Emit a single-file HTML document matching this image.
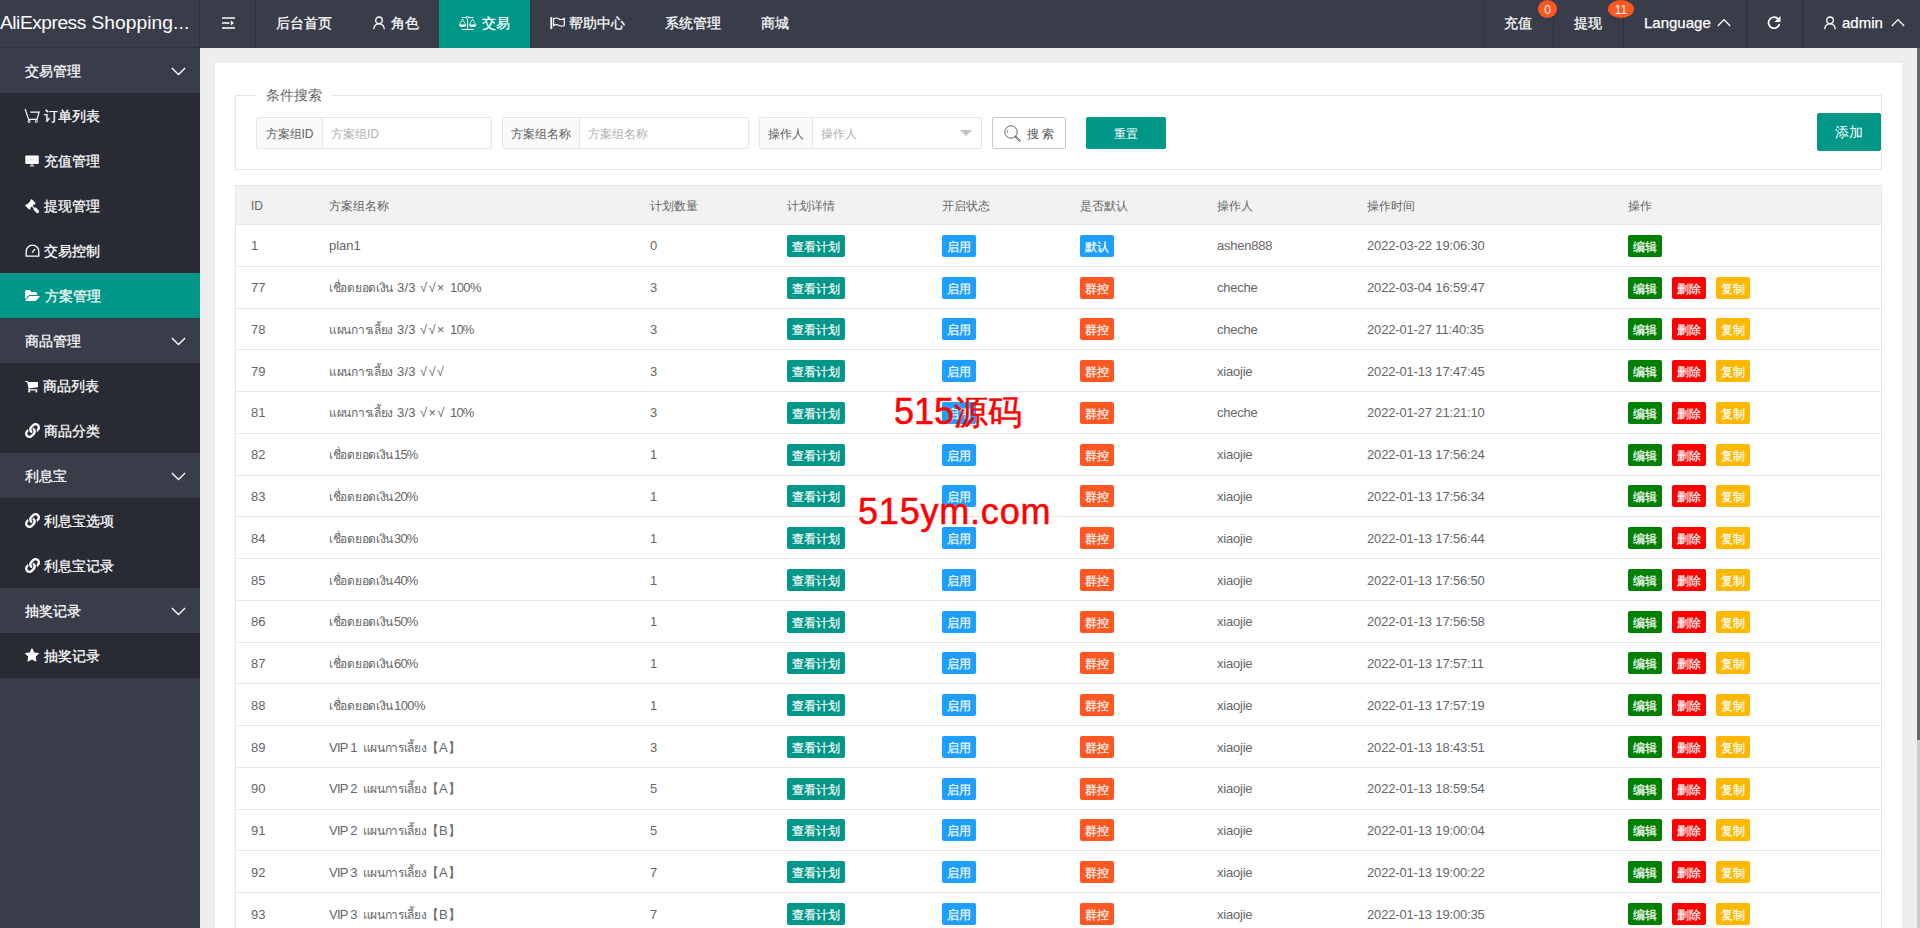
<!DOCTYPE html>
<html lang="zh">
<head>
<meta charset="utf-8">
<title>AliExpress Shopping</title>
<style>
*{box-sizing:border-box;margin:0;padding:0}
html,body{width:1920px;height:928px;overflow:hidden}
body{position:relative;background:#eee;font-family:"Liberation Sans",sans-serif;font-size:14px;color:#666;line-height:1}
.abs{position:absolute}
svg{display:block}
/* header */
#hd{position:absolute;left:0;top:0;width:1920px;height:48px;background:#393D49;color:#fff}
#hd .t{position:absolute;top:0;height:48px;line-height:46px;font-size:14px;color:#fff;white-space:nowrap}
#hd .dv{position:absolute;top:0;width:1px;height:48px;background:#2f323c}
#hd svg{position:absolute}
#logo{position:absolute;left:0;top:0;width:200px;height:48px;line-height:45.6px;font-size:19.2px;letter-spacing:-0.48px;word-spacing:0.7px;color:#fff;white-space:nowrap;overflow:hidden}
.badge{position:absolute;top:0;height:18px;line-height:20px;border-radius:50%;background:#FF5722;color:#fff;font-size:12px;text-align:center}
/* side */
#sd{position:absolute;left:0;top:48px;width:200px;height:880px;background:#393D49;color:#fff}
#sd .g,#sd .i{position:absolute;left:0;width:200px;height:45px;line-height:46px;font-size:14px;color:#fff;white-space:nowrap}
#sd .g{padding-left:25px}
#sd .i{background:#282B33}
#sd .i.on{background:#009688}
#sd .i span{position:absolute;left:44px;top:0}
#sd .i svg{position:absolute}
#sd .g,#sd .i span,#hd .t{-webkit-text-stroke:0.25px #fff}
#sd .i svg.fa{left:25px;top:15.5px}
#sd .g svg{position:absolute;left:170.5px;top:19px}
/* card */
#card{position:absolute;left:215px;top:63px;width:1687px;height:900px;background:#fff;box-shadow:0 1px 2px 0 rgba(0,0,0,.05)}
#fs{position:absolute;left:235px;top:95px;width:1647px;height:75px;border:1px solid #e6e6e6}
#lg{position:absolute;left:256px;top:85px;padding:0 10px;background:#fff;font-size:14px;line-height:20px;color:#666}
.ig{position:absolute;top:117px;height:32px;border:1px solid #e6e6e6;border-radius:2px;background:#fff;overflow:hidden}
.ig .lb{position:absolute;left:0;top:0;height:30px;line-height:32px;background:#fafafa;border-right:1px solid #e6e6e6;font-size:12px;color:#606060;text-align:center;white-space:nowrap}
.ig .ph{position:absolute;top:0;height:30px;line-height:32px;font-size:12px;color:#b0b0b0;white-space:nowrap}
.btn{position:absolute;color:#fff;background:#009688;border-radius:2px;text-align:center;white-space:nowrap}
/* table */
#tb{position:absolute;left:235px;top:185px;width:1647px;border-collapse:separate;border-spacing:0;table-layout:fixed;border-left:1px solid #e6e6e6;border-right:1px solid #e6e6e6;border-top:1px solid #e6e6e6;font-size:13px;color:#666}
#tb th{height:39px;background:#f2f2f2;border-bottom:1px solid #e6e6e6;font-weight:normal;text-align:left;padding:1px 15px 0;font-size:12px;vertical-align:middle;white-space:nowrap}
#tb td{border-bottom:1px solid #e6e6e6;padding:0 15px;vertical-align:middle;white-space:nowrap;overflow:hidden}
.b{display:inline-block;height:22px;line-height:24.2px;-webkit-text-stroke:.2px #fff;padding:0 5px;font-size:12px;color:#fff;border-radius:2px;vertical-align:middle;margin-right:10px}
#tb tr.s1 td.x{padding-top:2px}
.tm{letter-spacing:-0.16px}
.op{letter-spacing:-0.22px}
.th{display:inline-block;font-size:12px;letter-spacing:-.3px;white-space:nowrap;vertical-align:baseline}
.sg{display:inline-block;white-space:nowrap;vertical-align:baseline}
.tl{background:#009688}.bl{background:#1E9FFF}.or{background:#FF5722}.gr{background:#008000}.rd{background:#f00}.ye{background:#FFB800}
.wm{position:absolute;color:#f00;font-size:36px;line-height:40px;white-space:nowrap;-webkit-text-stroke:0.5px #f00}
#sb{position:absolute;left:1917px;top:48px;width:3px;height:880px;background:#ccc}
#sb i{position:absolute;left:0;top:0;width:3px;height:692px;background:#666}
</style>
</head>
<body>
<div id="sd">
  <div class="g" style="top:0">交易管理<svg width="15" height="9" viewBox="0 0 15 9"><path d="M0.9 1L7.5 7.5L14.1 1" fill="none" stroke="#fff" stroke-width="1.3"/></svg></div>
  <div class="i" style="top:45px"><svg style="left:24px;top:14px" width="17" height="17" viewBox="0 0 17 17"><path d="M1.1 2.05L4.7 12.4H13L15.1 5.1H6.4" fill="none" stroke="#fff" stroke-width="1.15"/><circle cx="5.1" cy="14.4" r="1.1" fill="none" stroke="#fff" stroke-width="1"/><circle cx="12.4" cy="14.4" r="1.1" fill="none" stroke="#fff" stroke-width="1"/></svg><span>订单列表</span></div>
  <div class="i" style="top:90px"><svg style="left:25px;top:17px" width="15" height="12" viewBox="0 0 15 12"><rect x="0.3" y="0.4" width="13.5" height="8.5" rx="1" fill="#fff"/><path d="M7 8.9V10.6M5 10.9H9.2" stroke="#fff" stroke-width="1" fill="none"/><path d="M3 5.5L5.5 4.2L7.5 5L10.5 3" stroke="#d8c8c8" stroke-width="0.7" fill="none"/></svg><span>充值管理</span></div>
  <div class="i" style="top:135px"><svg class="fa" style="left:24.8px;top:16px" width="14.50" height="14.50" viewBox="0 -1536 1792 1792"><path fill="#fff" transform="scale(1,-1)" d="M1771 0C1771 34 1757 67 1734 91L1371 454C1347 477 1314 491 1280 491C1242 491 1211 475 1184 448L928 704L1054 830C1063 839 1068 851 1068 864C1068 877 1063 889 1054 898C1084 868 1106 840 1152 840C1178 840 1201 850 1220 868C1256 902 1304 938 1304 992C1304 1017 1294 1042 1276 1060L868 1468C850 1486 825 1496 800 1496C746 1496 710 1448 676 1412C658 1393 648 1370 648 1344C648 1298 676 1276 706 1246C697 1255 685 1260 672 1260C659 1260 647 1255 638 1246L290 898C281 889 276 877 276 864C276 851 281 839 290 830C260 860 238 888 192 888C166 888 143 878 124 860C88 826 40 790 40 736C40 711 50 686 68 668L476 260C494 242 519 232 544 232C598 232 634 280 668 316C686 335 696 358 696 384C696 430 668 452 638 482C647 473 659 468 672 468C685 468 697 473 706 482L832 608L1088 352C1061 325 1045 294 1045 256C1045 222 1059 189 1083 166L1446 -198C1469 -221 1502 -235 1536 -235C1570 -235 1603 -221 1627 -198L1734 -90C1757 -67 1771 -34 1771 0Z"/></svg><span>提现管理</span></div>
  <div class="i" style="top:180px"><svg style="left:25px;top:16px" width="15" height="13" viewBox="0 0 15 13"><path d="M1.2 12.2V7.5A6.3 6.3 0 0 1 13.8 7.5V12.2Z" fill="none" stroke="#fff" stroke-width="1.3"/><path d="M7.2 8.6L10 5" stroke="#fff" stroke-width="1.3" fill="none"/></svg><span>交易控制</span></div>
  <div class="i on" style="top:225px"><svg class="fa" style="left:25px;top:15.7px" width="15.00" height="14.00" viewBox="0 -1536 1920 1792"><path fill="#fff" transform="scale(1,-1)" d="M1879 584C1879 629 1828 640 1792 640H704C616 640 498 586 440 518L104 122C88 104 73 80 73 56C73 11 124 0 160 0H1248C1336 0 1454 54 1512 122L1848 518C1864 536 1879 560 1879 584ZM1536 928C1536 1051 1435 1152 1312 1152H768V1184C768 1307 667 1408 544 1408H224C101 1408 0 1307 0 1184V224C0 216 1 207 1 199L6 205L343 601C424 697 579 768 704 768H1536Z"/></svg><span style="left:45px">方案管理</span></div>
  <div class="g" style="top:270px">商品管理<svg width="15" height="9" viewBox="0 0 15 9"><path d="M0.9 1L7.5 7.5L14.1 1" fill="none" stroke="#fff" stroke-width="1.3"/></svg></div>
  <div class="i" style="top:315px"><svg class="fa" style="left:24.9px;top:15.6px" width="13.46" height="14.50" viewBox="0 -1536 1664 1792"><path fill="#fff" transform="scale(1,-1)" d="M640 0C640 70 582 128 512 128C442 128 384 70 384 0C384 -70 442 -128 512 -128C582 -128 640 -70 640 0ZM1536 0C1536 70 1478 128 1408 128C1338 128 1280 70 1280 0C1280 -70 1338 -128 1408 -128C1478 -128 1536 -70 1536 0ZM1664 1088C1664 1123 1635 1152 1600 1152H399C389 1200 387 1280 320 1280H64C29 1280 0 1251 0 1216C0 1181 29 1152 64 1152H268L445 329C429 298 384 223 384 192C384 157 413 128 448 128H1472C1507 128 1536 157 1536 192C1536 227 1507 256 1472 256H552C562 276 576 297 576 320C576 344 568 367 563 390L1607 512C1639 516 1664 544 1664 576Z"/></svg><span style="left:43px">商品列表</span></div>
  <div class="i" style="top:360px"><svg style="left:24.6px;top:15.1px" width="15" height="15" viewBox="0 0 512 512"><path fill="#fff" d="M326.612 185.391c59.747 59.809 58.927 155.698.36 214.59-.11.12-.24.25-.36.37l-67.2 67.2c-59.27 59.27-155.699 59.262-214.96 0-59.27-59.26-59.27-155.7 0-214.96l37.106-37.106c9.84-9.84 26.786-3.3 27.294 10.606.648 17.722 3.826 35.527 9.69 52.721 1.986 5.822.567 12.262-3.783 16.612l-13.087 13.087c-28.026 28.026-28.905 73.66-1.155 101.96 28.024 28.579 74.086 28.749 102.325.51l67.2-67.19c28.191-28.191 28.073-73.757 0-101.83-3.701-3.694-7.429-6.564-10.341-8.569a16.037 16.037 0 0 1-6.947-12.606c-.396-10.567 3.348-21.456 11.698-29.806l21.054-21.055c5.521-5.521 14.182-6.199 20.584-1.731a152.482 152.482 0 0 1 20.522 17.197zM467.547 44.449c-59.261-59.262-155.69-59.27-214.96 0l-67.2 67.2c-.12.12-.25.25-.36.37-58.566 58.892-59.387 154.781.36 214.59a152.454 152.454 0 0 0 20.521 17.196c6.402 4.468 15.064 3.789 20.584-1.731l21.054-21.055c8.35-8.35 12.094-19.239 11.698-29.806a16.037 16.037 0 0 0-6.947-12.606c-2.912-2.005-6.64-4.875-10.341-8.569-28.073-28.073-28.191-73.639 0-101.83l67.2-67.19c28.239-28.239 74.3-28.069 102.325.51 27.75 28.3 26.872 73.934-1.155 101.96l-13.087 13.087c-4.35 4.35-5.769 10.79-3.783 16.612 5.864 17.194 9.042 34.999 9.69 52.721.509 13.906 17.454 20.446 27.294 10.606l37.106-37.106c59.271-59.259 59.271-155.699.001-214.959z"/></svg><span>商品分类</span></div>
  <div class="g" style="top:405px">利息宝<svg width="15" height="9" viewBox="0 0 15 9"><path d="M0.9 1L7.5 7.5L14.1 1" fill="none" stroke="#fff" stroke-width="1.3"/></svg></div>
  <div class="i" style="top:450px"><svg style="left:24.6px;top:15.1px" width="15" height="15" viewBox="0 0 512 512"><path fill="#fff" d="M326.612 185.391c59.747 59.809 58.927 155.698.36 214.59-.11.12-.24.25-.36.37l-67.2 67.2c-59.27 59.27-155.699 59.262-214.96 0-59.27-59.26-59.27-155.7 0-214.96l37.106-37.106c9.84-9.84 26.786-3.3 27.294 10.606.648 17.722 3.826 35.527 9.69 52.721 1.986 5.822.567 12.262-3.783 16.612l-13.087 13.087c-28.026 28.026-28.905 73.66-1.155 101.96 28.024 28.579 74.086 28.749 102.325.51l67.2-67.19c28.191-28.191 28.073-73.757 0-101.83-3.701-3.694-7.429-6.564-10.341-8.569a16.037 16.037 0 0 1-6.947-12.606c-.396-10.567 3.348-21.456 11.698-29.806l21.054-21.055c5.521-5.521 14.182-6.199 20.584-1.731a152.482 152.482 0 0 1 20.522 17.197zM467.547 44.449c-59.261-59.262-155.69-59.27-214.96 0l-67.2 67.2c-.12.12-.25.25-.36.37-58.566 58.892-59.387 154.781.36 214.59a152.454 152.454 0 0 0 20.521 17.196c6.402 4.468 15.064 3.789 20.584-1.731l21.054-21.055c8.35-8.35 12.094-19.239 11.698-29.806a16.037 16.037 0 0 0-6.947-12.606c-2.912-2.005-6.64-4.875-10.341-8.569-28.073-28.073-28.191-73.639 0-101.83l67.2-67.19c28.239-28.239 74.3-28.069 102.325.51 27.75 28.3 26.872 73.934-1.155 101.96l-13.087 13.087c-4.35 4.35-5.769 10.79-3.783 16.612 5.864 17.194 9.042 34.999 9.69 52.721.509 13.906 17.454 20.446 27.294 10.606l37.106-37.106c59.271-59.259 59.271-155.699.001-214.959z"/></svg><span>利息宝选项</span></div>
  <div class="i" style="top:495px"><svg style="left:24.6px;top:15.1px" width="15" height="15" viewBox="0 0 512 512"><path fill="#fff" d="M326.612 185.391c59.747 59.809 58.927 155.698.36 214.59-.11.12-.24.25-.36.37l-67.2 67.2c-59.27 59.27-155.699 59.262-214.96 0-59.27-59.26-59.27-155.7 0-214.96l37.106-37.106c9.84-9.84 26.786-3.3 27.294 10.606.648 17.722 3.826 35.527 9.69 52.721 1.986 5.822.567 12.262-3.783 16.612l-13.087 13.087c-28.026 28.026-28.905 73.66-1.155 101.96 28.024 28.579 74.086 28.749 102.325.51l67.2-67.19c28.191-28.191 28.073-73.757 0-101.83-3.701-3.694-7.429-6.564-10.341-8.569a16.037 16.037 0 0 1-6.947-12.606c-.396-10.567 3.348-21.456 11.698-29.806l21.054-21.055c5.521-5.521 14.182-6.199 20.584-1.731a152.482 152.482 0 0 1 20.522 17.197zM467.547 44.449c-59.261-59.262-155.69-59.27-214.96 0l-67.2 67.2c-.12.12-.25.25-.36.37-58.566 58.892-59.387 154.781.36 214.59a152.454 152.454 0 0 0 20.521 17.196c6.402 4.468 15.064 3.789 20.584-1.731l21.054-21.055c8.35-8.35 12.094-19.239 11.698-29.806a16.037 16.037 0 0 0-6.947-12.606c-2.912-2.005-6.64-4.875-10.341-8.569-28.073-28.073-28.191-73.639 0-101.83l67.2-67.19c28.239-28.239 74.3-28.069 102.325.51 27.75 28.3 26.872 73.934-1.155 101.96l-13.087 13.087c-4.35 4.35-5.769 10.79-3.783 16.612 5.864 17.194 9.042 34.999 9.69 52.721.509 13.906 17.454 20.446 27.294 10.606l37.106-37.106c59.271-59.259 59.271-155.699.001-214.959z"/></svg><span>利息宝记录</span></div>
  <div class="g" style="top:540px">抽奖记录<svg width="15" height="9" viewBox="0 0 15 9"><path d="M0.9 1L7.5 7.5L14.1 1" fill="none" stroke="#fff" stroke-width="1.3"/></svg></div>
  <div class="i" style="top:585px"><svg class="fa" style="left:25.1px;top:15.2px" width="13.93" height="15.00" viewBox="0 -1536 1664 1792"><path fill="#fff" transform="scale(1,-1)" d="M1664 889C1664 919 1632 931 1608 935L1106 1008L881 1463C872 1482 855 1504 832 1504C809 1504 792 1482 783 1463L558 1008L56 935C31 931 0 919 0 889C0 871 13 854 25 841L389 487L303 -13C302 -20 301 -26 301 -33C301 -59 314 -83 343 -83C357 -83 370 -78 383 -71L832 165L1281 -71C1293 -78 1307 -83 1321 -83C1350 -83 1362 -59 1362 -33C1362 -26 1362 -20 1361 -13L1275 487L1638 841C1651 854 1664 871 1664 889Z"/></svg><span>抽奖记录</span></div>
</div>

<div id="card"></div>
<div id="fs"></div>
<div id="lg">条件搜索</div>

<div class="ig" style="left:256px;width:236px"><div class="lb" style="width:66px">方案组ID</div><div class="ph" style="left:74px">方案组ID</div></div>
<div class="ig" style="left:502px;width:247px"><div class="lb" style="width:77px">方案组名称</div><div class="ph" style="left:85px">方案组名称</div></div>
<div class="ig" style="left:759px;width:223px"><div class="lb" style="width:53px">操作人</div><div class="ph" style="left:61px">操作人</div>
  <svg class="abs" style="left:200px;top:12px" width="12" height="6" viewBox="0 0 12 6"><path d="M0 0H12L6 6Z" fill="#c2c2c2"/></svg></div>
<div class="abs" style="left:992px;top:117px;width:74px;height:32px;border:1px solid #c9c9c9;border-radius:2px;background:#fff;font-size:12px;line-height:30px;color:#555;white-space:nowrap">
  <svg class="abs" style="left:10.5px;top:7px" width="18" height="18" viewBox="0 0 18 18"><circle cx="7" cy="7" r="6.2" fill="none" stroke="#666" stroke-width="1"/><path d="M4 4.5A4 4 0 0 0 3.6 8" fill="none" stroke="#777" stroke-width="0.8"/><path d="M11.6 11.6L15.6 15.6" stroke="#666" stroke-width="2" stroke-linecap="round" fill="none"/><path d="M12.3 12.3L15.3 15.3" stroke="#fff" stroke-width="0.6" fill="none"/></svg>
  <span class="abs" style="left:34px;top:1px">搜 索</span></div>
<div class="btn" style="left:1086px;top:117px;width:80px;height:32px;line-height:34px;font-size:12px">重置</div>
<div class="btn" style="left:1817px;top:113px;width:64px;height:38px;line-height:38px;font-size:14px">添加</div>

<table id="tb">
<colgroup><col style="width:78px"><col style="width:321px"><col style="width:137px"><col style="width:155px"><col style="width:138px"><col style="width:137px"><col style="width:150px"><col style="width:261px"><col></colgroup>
<thead><tr><th>ID</th><th>方案组名称</th><th>计划数量</th><th>计划详情</th><th>开启状态</th><th>是否默认</th><th>操作人</th><th>操作时间</th><th>操作</th></tr></thead>
<tbody>
<tr style="height:42px"><td class="x">1</td><td class="x">plan1</td><td class="x">0</td><td><span class="b tl">查看计划</span></td><td><span class="b bl">启用</span></td><td><span class="b bl">默认</span></td><td class="x op">ashen888</td><td class="x tm">2022-03-22 19:06:30</td><td><span class="b gr">编辑</span></td></tr>
<tr style="height:42px"><td class="x">77</td><td class="x"><span class="th" style="width:68px">เชื่อดยอดเงิน </span><span class="sg" style="width:23px;letter-spacing:.2px">3/3 </span><span class="sg" style="width:30px;letter-spacing:1.3px">√√× </span><span class="sg" style="letter-spacing:-.6px">100%</span></td><td class="x">3</td><td><span class="b tl">查看计划</span></td><td><span class="b bl">启用</span></td><td><span class="b or">群控</span></td><td class="x op">cheche</td><td class="x tm">2022-03-04 16:59:47</td><td><span class="b gr">编辑</span><span class="b rd">删除</span><span class="b ye">复制</span></td></tr>
<tr style="height:41px"><td class="x">78</td><td class="x"><span class="th" style="width:68px">แผนการเลี้ยง </span><span class="sg" style="width:23px;letter-spacing:.2px">3/3 </span><span class="sg" style="width:30px;letter-spacing:1.3px">√√× </span><span class="sg" style="letter-spacing:-.8px">10%</span></td><td class="x">3</td><td><span class="b tl">查看计划</span></td><td><span class="b bl">启用</span></td><td><span class="b or">群控</span></td><td class="x op">cheche</td><td class="x tm">2022-01-27 11:40:35</td><td><span class="b gr">编辑</span><span class="b rd">删除</span><span class="b ye">复制</span></td></tr>
<tr class="s1" style="height:42px"><td class="x">79</td><td class="x"><span class="th" style="width:68px">แผนการเลี้ยง </span><span class="sg" style="width:23px;letter-spacing:.2px">3/3 </span><span class="sg" style="width:30px;letter-spacing:1.3px">√√√ </span></td><td class="x">3</td><td><span class="b tl">查看计划</span></td><td><span class="b bl">启用</span></td><td><span class="b or">群控</span></td><td class="x op">xiaojie</td><td class="x tm">2022-01-13 17:47:45</td><td><span class="b gr">编辑</span><span class="b rd">删除</span><span class="b ye">复制</span></td></tr>
<tr style="height:42px"><td class="x">81</td><td class="x"><span class="th" style="width:68px">แผนการเลี้ยง </span><span class="sg" style="width:23px;letter-spacing:.2px">3/3 </span><span class="sg" style="width:30px;letter-spacing:1.3px">√×√ </span><span class="sg" style="letter-spacing:-.8px">10%</span></td><td class="x">3</td><td><span class="b tl">查看计划</span></td><td><span class="b bl">启用</span></td><td><span class="b or">群控</span></td><td class="x op">cheche</td><td class="x tm">2022-01-27 21:21:10</td><td><span class="b gr">编辑</span><span class="b rd">删除</span><span class="b ye">复制</span></td></tr>
<tr style="height:42px"><td class="x">82</td><td class="x"><span class="th" style="width:65px">เชื่อดยอดเงิน</span><span class="sg" style="letter-spacing:-.8px">15%</span></td><td class="x">1</td><td><span class="b tl">查看计划</span></td><td><span class="b bl">启用</span></td><td><span class="b or">群控</span></td><td class="x op">xiaojie</td><td class="x tm">2022-01-13 17:56:24</td><td><span class="b gr">编辑</span><span class="b rd">删除</span><span class="b ye">复制</span></td></tr>
<tr style="height:41px"><td class="x">83</td><td class="x"><span class="th" style="width:65px">เชื่อดยอดเงิน</span><span class="sg" style="letter-spacing:-.8px">20%</span></td><td class="x">1</td><td><span class="b tl">查看计划</span></td><td><span class="b bl">启用</span></td><td><span class="b or">群控</span></td><td class="x op">xiaojie</td><td class="x tm">2022-01-13 17:56:34</td><td><span class="b gr">编辑</span><span class="b rd">删除</span><span class="b ye">复制</span></td></tr>
<tr class="s1" style="height:42px"><td class="x">84</td><td class="x"><span class="th" style="width:65px">เชื่อดยอดเงิน</span><span class="sg" style="letter-spacing:-.8px">30%</span></td><td class="x">1</td><td><span class="b tl">查看计划</span></td><td><span class="b bl">启用</span></td><td><span class="b or">群控</span></td><td class="x op">xiaojie</td><td class="x tm">2022-01-13 17:56:44</td><td><span class="b gr">编辑</span><span class="b rd">删除</span><span class="b ye">复制</span></td></tr>
<tr class="s1" style="height:42px"><td class="x">85</td><td class="x"><span class="th" style="width:65px">เชื่อดยอดเงิน</span><span class="sg" style="letter-spacing:-.8px">40%</span></td><td class="x">1</td><td><span class="b tl">查看计划</span></td><td><span class="b bl">启用</span></td><td><span class="b or">群控</span></td><td class="x op">xiaojie</td><td class="x tm">2022-01-13 17:56:50</td><td><span class="b gr">编辑</span><span class="b rd">删除</span><span class="b ye">复制</span></td></tr>
<tr style="height:42px"><td class="x">86</td><td class="x"><span class="th" style="width:65px">เชื่อดยอดเงิน</span><span class="sg" style="letter-spacing:-.8px">50%</span></td><td class="x">1</td><td><span class="b tl">查看计划</span></td><td><span class="b bl">启用</span></td><td><span class="b or">群控</span></td><td class="x op">xiaojie</td><td class="x tm">2022-01-13 17:56:58</td><td><span class="b gr">编辑</span><span class="b rd">删除</span><span class="b ye">复制</span></td></tr>
<tr style="height:41px"><td class="x">87</td><td class="x"><span class="th" style="width:65px">เชื่อดยอดเงิน</span><span class="sg" style="letter-spacing:-.8px">60%</span></td><td class="x">1</td><td><span class="b tl">查看计划</span></td><td><span class="b bl">启用</span></td><td><span class="b or">群控</span></td><td class="x op">xiaojie</td><td class="x tm">2022-01-13 17:57:11</td><td><span class="b gr">编辑</span><span class="b rd">删除</span><span class="b ye">复制</span></td></tr>
<tr class="s1" style="height:42px"><td class="x">88</td><td class="x"><span class="th" style="width:65px">เชื่อดยอดเงิน</span><span class="sg" style="letter-spacing:-.6px">100%</span></td><td class="x">1</td><td><span class="b tl">查看计划</span></td><td><span class="b bl">启用</span></td><td><span class="b or">群控</span></td><td class="x op">xiaojie</td><td class="x tm">2022-01-13 17:57:19</td><td><span class="b gr">编辑</span><span class="b rd">删除</span><span class="b ye">复制</span></td></tr>
<tr class="s1" style="height:42px"><td class="x">89</td><td class="x"><span class="sg" style="width:33.6px;letter-spacing:-.75px">VIP 1 </span><span class="th" style="width:63.4px">แผนการเลี้ยง</span>【A】</td><td class="x">3</td><td><span class="b tl">查看计划</span></td><td><span class="b bl">启用</span></td><td><span class="b or">群控</span></td><td class="x op">xiaojie</td><td class="x tm">2022-01-13 18:43:51</td><td><span class="b gr">编辑</span><span class="b rd">删除</span><span class="b ye">复制</span></td></tr>
<tr style="height:42px"><td class="x">90</td><td class="x"><span class="sg" style="width:33.6px;letter-spacing:-.75px">VIP 2 </span><span class="th" style="width:63.4px">แผนการเลี้ยง</span>【A】</td><td class="x">5</td><td><span class="b tl">查看计划</span></td><td><span class="b bl">启用</span></td><td><span class="b or">群控</span></td><td class="x op">xiaojie</td><td class="x tm">2022-01-13 18:59:54</td><td><span class="b gr">编辑</span><span class="b rd">删除</span><span class="b ye">复制</span></td></tr>
<tr style="height:41px"><td class="x">91</td><td class="x"><span class="sg" style="width:33.6px;letter-spacing:-.75px">VIP 2 </span><span class="th" style="width:63.4px">แผนการเลี้ยง</span>【B】</td><td class="x">5</td><td><span class="b tl">查看计划</span></td><td><span class="b bl">启用</span></td><td><span class="b or">群控</span></td><td class="x op">xiaojie</td><td class="x tm">2022-01-13 19:00:04</td><td><span class="b gr">编辑</span><span class="b rd">删除</span><span class="b ye">复制</span></td></tr>
<tr class="s1" style="height:42px"><td class="x">92</td><td class="x"><span class="sg" style="width:33.6px;letter-spacing:-.75px">VIP 3 </span><span class="th" style="width:63.4px">แผนการเลี้ยง</span>【A】</td><td class="x">7</td><td><span class="b tl">查看计划</span></td><td><span class="b bl">启用</span></td><td><span class="b or">群控</span></td><td class="x op">xiaojie</td><td class="x tm">2022-01-13 19:00:22</td><td><span class="b gr">编辑</span><span class="b rd">删除</span><span class="b ye">复制</span></td></tr>
<tr class="s1" style="height:42px"><td class="x">93</td><td class="x"><span class="sg" style="width:33.6px;letter-spacing:-.75px">VIP 3 </span><span class="th" style="width:63.4px">แผนการเลี้ยง</span>【B】</td><td class="x">7</td><td><span class="b tl">查看计划</span></td><td><span class="b bl">启用</span></td><td><span class="b or">群控</span></td><td class="x op">xiaojie</td><td class="x tm">2022-01-13 19:00:35</td><td><span class="b gr">编辑</span><span class="b rd">删除</span><span class="b ye">复制</span></td></tr>
</tbody>
</table>

<div class="wm" style="left:894px;top:391.6px">515<span style="font-size:34px">源码</span></div>
<div class="wm" style="left:858px;top:492px;letter-spacing:0.8px">515ym.com</div>

<div id="hd">
  <div id="logo">AliExpress <span style="letter-spacing:0.08px">Shopping...</span></div>
  <div class="dv" style="left:199px"></div>
  <div class="abs" style="left:0;top:47px;width:199px;height:1px;background:#32353f"></div>
  <div class="dv" style="left:255px"></div>
  <svg style="left:222px;top:17px" width="14" height="12" viewBox="0 0 14 12"><path d="M0 1H13M0 6H7.5M0 11H13" stroke="#fff" stroke-width="1.7" fill="none"/><path d="M8.8 3.4L12 6L8.8 8.6Z" fill="#fff"/></svg>
  <div class="t" style="left:276px">后台首页</div>
  <svg style="left:372px;top:16px" width="14" height="14" viewBox="0 0 14 14"><circle cx="7" cy="4.3" r="3.3" fill="none" stroke="#fff" stroke-width="1.3"/><path d="M1.7 13.2C1.9 9.6 4 7.8 7 7.8S12.1 9.6 12.3 13.2" fill="none" stroke="#fff" stroke-width="1.3"/></svg>
  <div class="t" style="left:391px">角色</div>
  <div class="abs" style="left:439px;top:0;width:91px;height:48px;background:#009688"></div>
  <svg style="left:458px;top:15px" width="20" height="17" viewBox="0 0 20 17"><path d="M3.7 2.5H15.6M3.7 14.5H15.6M9.5 3.4V14.5" stroke="#fff" stroke-width="1.1" fill="none"/><circle cx="9.5" cy="2.4" r="1.15" fill="#009688" stroke="#fff" stroke-width="0.9"/><path d="M1.4 9.8L4.5 4L7.6 9.8M11.4 9.8L14.6 4L17.9 9.8" stroke="#fff" stroke-width="0.85" fill="none" opacity="0.9"/><path d="M0.9 9.5H8A3.55 2.5 0 0 1 0.9 9.5ZM11 9.5H18.3A3.65 2.5 0 0 1 11 9.5Z" fill="#fff"/></svg>
  <div class="t" style="left:482px">交易</div>
  <svg style="left:550px;top:17px" width="15" height="13" viewBox="0 0 15 13"><path d="M1.3 0V12" stroke="#fff" stroke-width="1.9" fill="none"/><path d="M3.6 1.8C5.4 0.6 7.4 1 9 2S12.5 2.5 14.3 1.4V8.4C12.5 9.5 10.6 9.2 9 8.4S5.4 7.4 3.6 8.5Z" stroke="#fff" stroke-width="1.15" fill="none"/></svg>
  <div class="t" style="left:569px">帮助中心</div>
  <div class="t" style="left:665px">系统管理</div>
  <div class="t" style="left:761px">商城</div>

  <div class="dv" style="left:1483px"></div>
  <div class="dv" style="left:1553px"></div>
  <div class="dv" style="left:1623px"></div>
  <div class="dv" style="left:1746px"></div>
  <div class="dv" style="left:1802px"></div>
  <div class="t" style="left:1504px">充值</div>
  <div class="badge" style="left:1538px;width:19px">0</div>
  <div class="t" style="left:1574px">提现</div>
  <div class="badge" style="left:1608px;width:26px">11</div>
  <div class="t" style="left:1644px;font-size:15px">Language</div>
  <svg style="left:1717px;top:18px" width="14" height="9" viewBox="0 0 14 9"><path d="M0.8 8L7 1.6L13.2 8" fill="none" stroke="#fff" stroke-width="1.3"/></svg>
  <svg style="left:1766px;top:15px" width="16" height="15" viewBox="0 0 16 15"><path d="M12.2 4.1A5.5 5.5 0 1 0 13.4 9" fill="none" stroke="#fff" stroke-width="1.7"/><path d="M14.5 1.1V6.9H8.2Z" fill="#fff"/></svg>
  <svg style="left:1823px;top:16px" width="14" height="14" viewBox="0 0 14 14"><circle cx="7" cy="4.3" r="3.3" fill="none" stroke="#fff" stroke-width="1.3"/><path d="M1.7 13.2C1.9 9.6 4 7.8 7 7.8S12.1 9.6 12.3 13.2" fill="none" stroke="#fff" stroke-width="1.3"/></svg>
  <div class="t" style="left:1842px;font-size:15px">admin</div>
  <svg style="left:1891px;top:18px" width="14" height="9" viewBox="0 0 14 9"><path d="M0.8 8L7 1.6L13.2 8" fill="none" stroke="#fff" stroke-width="1.3"/></svg>
</div>
<div id="sb"><i></i></div>
</body>
</html>
